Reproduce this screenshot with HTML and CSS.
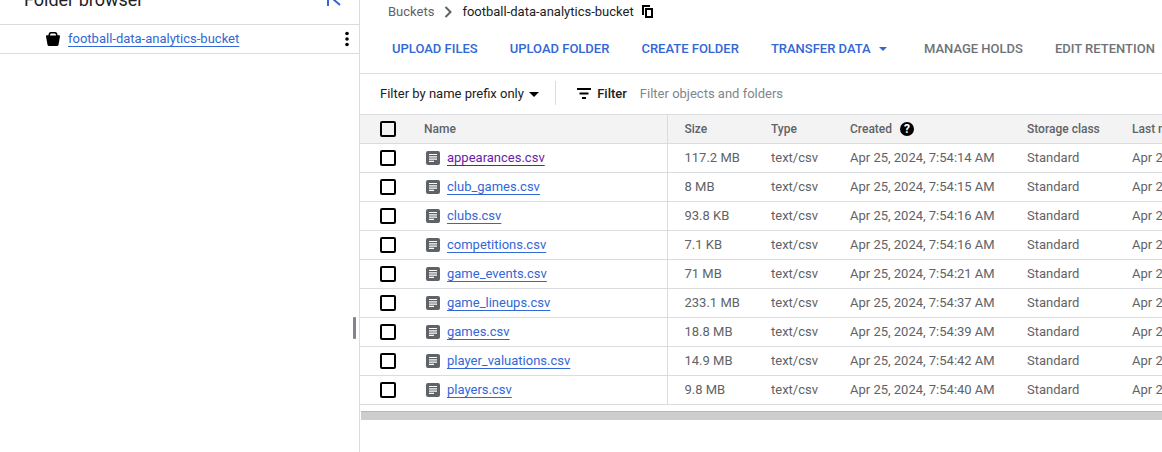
FILE: index.html
```html
<!DOCTYPE html>
<html lang="en">
<head>
    <meta charset="UTF-8">
    <title>Bucket details</title>
    <link rel="stylesheet" href="styles.css">
</head>
<body>

<svg class="defs" width="0" height="0">
    <symbol id="file-icon" viewBox="0 0 14 14">
        <rect width="14" height="14" rx="2" fill="#5f6368"/>
        <path d="M3 3.500h8M3 5.800h8M3 8.100h8M3 10.400h5" stroke="#fff" stroke-width="1.200"/>
    </symbol>
</svg>

<div class="page">
    <aside class="sidebar">
        <div class="sidebar-head">
            <h2>Folder browser</h2>
            <svg class="collapse" width="16" height="16" viewBox="0 0 16 16"><path d="M2 1v14M14 2L7 8l7 6" fill="none" stroke="#3367d6" stroke-width="2"/></svg>
        </div>
        <div class="tree-row">
            <svg class="bucket" width="14" height="14" viewBox="0 0 14 14"><path d="M2.500 3.200C2.500 1 3.500 0 5 0h4c1.500 0 2.500 1 2.500 3.200H13c.6 0 1 .4 1 1l-1.500 8.600c-.1.700-.6 1.200-1.200 1.200H2.700c-.6 0-1.100-.5-1.200-1.200L0 4.200c0-.6.4-1 1-1zM4 3.500h6c0-1.200-.4-2-1.300-2H5.300C4.400 1.500 4 2.300 4 3.500z" fill="#000" fill-rule="evenodd"/></svg>
            <a class="link" href="#">football-data-analytics-bucket</a>
            <svg class="dots" width="4" height="16" viewBox="0 0 4 16"><circle cx="2" cy="2.500" r="1.800"/><circle cx="2" cy="8" r="1.800"/><circle cx="2" cy="13.500" r="1.800"/></svg>
        </div>
    </aside>

    <main class="main">
        <div class="breadcrumb">
            <span class="crumb-root">Buckets</span>
            <svg width="10" height="12" viewBox="0 0 10 12"><path d="M2.500 1l5 5-5 5" fill="none" stroke="#5f6368" stroke-width="2"/></svg>
            <span class="crumb-current">football-data-analytics-bucket</span>
            <svg class="copy" width="11" height="13" viewBox="0 0 11 13"><path d="M1 10V1h7M4 4h6v8H4z" fill="none" stroke="#000" stroke-width="2"/></svg>
        </div>

        <div class="toolbar">
            <a class="action" href="#">UPLOAD FILES</a>
            <a class="action" href="#">UPLOAD FOLDER</a>
            <a class="action" href="#">CREATE FOLDER</a>
            <a class="action action-menu" href="#">TRANSFER DATA <span class="caret caret-blue"></span></a>
            <a class="action disabled" href="#">MANAGE HOLDS</a>
            <a class="action disabled" href="#">EDIT RETENTION</a>
        </div>

        <div class="filter-bar">
            <span class="prefix">Filter by name prefix only <span class="caret"></span></span>
            <span class="filter-divider"></span>
            <svg width="16" height="11" viewBox="0 0 16 11"><path d="M1 1h14M3.500 5.500h9M6 10h4" stroke="#000" stroke-width="1.800"/></svg>
            <span class="filter-label">Filter</span>
            <span class="filter-hint">Filter objects and folders</span>
        </div>

        <div class="table-wrap">
            <table class="objects">
                <colgroup>
                    <col class="c-check"><col class="c-name"><col class="c-size"><col class="c-type"><col class="c-created"><col class="c-class"><col class="c-last">
                </colgroup>
                <thead>
                    <tr>
                        <th class="check"><span class="box"></span></th>
                        <th class="name-col">Name</th>
                        <th class="size-col">Size</th>
                        <th>Type</th>
                        <th>Created <span class="help">?</span></th>
                        <th>Storage class</th>
                        <th>Last modified</th>
                    </tr>
                </thead>
                <tbody>
                    <tr><td class="check"><span class="box"></span></td><td class="name-col"><svg class="file"><use href="#file-icon"/></svg><a class="link visited" href="#">appearances.csv</a></td><td class="size-col">117.2 MB</td><td>text/csv</td><td>Apr 25, 2024, 7:54:14 AM</td><td>Standard</td><td>Apr 25, 2024, 7:54:14 AM</td></tr>
                    <tr><td class="check"><span class="box"></span></td><td class="name-col"><svg class="file"><use href="#file-icon"/></svg><a class="link" href="#">club_games.csv</a></td><td class="size-col">8 MB</td><td>text/csv</td><td>Apr 25, 2024, 7:54:15 AM</td><td>Standard</td><td>Apr 25, 2024, 7:54:15 AM</td></tr>
                    <tr><td class="check"><span class="box"></span></td><td class="name-col"><svg class="file"><use href="#file-icon"/></svg><a class="link" href="#">clubs.csv</a></td><td class="size-col">93.8 KB</td><td>text/csv</td><td>Apr 25, 2024, 7:54:16 AM</td><td>Standard</td><td>Apr 25, 2024, 7:54:16 AM</td></tr>
                    <tr><td class="check"><span class="box"></span></td><td class="name-col"><svg class="file"><use href="#file-icon"/></svg><a class="link" href="#">competitions.csv</a></td><td class="size-col">7.1 KB</td><td>text/csv</td><td>Apr 25, 2024, 7:54:16 AM</td><td>Standard</td><td>Apr 25, 2024, 7:54:16 AM</td></tr>
                    <tr><td class="check"><span class="box"></span></td><td class="name-col"><svg class="file"><use href="#file-icon"/></svg><a class="link" href="#">game_events.csv</a></td><td class="size-col">71 MB</td><td>text/csv</td><td>Apr 25, 2024, 7:54:21 AM</td><td>Standard</td><td>Apr 25, 2024, 7:54:21 AM</td></tr>
                    <tr><td class="check"><span class="box"></span></td><td class="name-col"><svg class="file"><use href="#file-icon"/></svg><a class="link" href="#">game_lineups.csv</a></td><td class="size-col">233.1 MB</td><td>text/csv</td><td>Apr 25, 2024, 7:54:37 AM</td><td>Standard</td><td>Apr 25, 2024, 7:54:37 AM</td></tr>
                    <tr><td class="check"><span class="box"></span></td><td class="name-col"><svg class="file"><use href="#file-icon"/></svg><a class="link" href="#">games.csv</a></td><td class="size-col">18.8 MB</td><td>text/csv</td><td>Apr 25, 2024, 7:54:39 AM</td><td>Standard</td><td>Apr 25, 2024, 7:54:39 AM</td></tr>
                    <tr><td class="check"><span class="box"></span></td><td class="name-col"><svg class="file"><use href="#file-icon"/></svg><a class="link" href="#">player_valuations.csv</a></td><td class="size-col">14.9 MB</td><td>text/csv</td><td>Apr 25, 2024, 7:54:42 AM</td><td>Standard</td><td>Apr 25, 2024, 7:54:42 AM</td></tr>
                    <tr><td class="check"><span class="box"></span></td><td class="name-col"><svg class="file"><use href="#file-icon"/></svg><a class="link" href="#">players.csv</a></td><td class="size-col">9.8 MB</td><td>text/csv</td><td>Apr 25, 2024, 7:54:40 AM</td><td>Standard</td><td>Apr 25, 2024, 7:54:40 AM</td></tr>
                </tbody>
            </table>
        </div>
        <div class="scrollbar"></div>
        <span class="drag-handle"></span>
    </main>
</div>

</body>
</html>
```

FILE: styles.css
```css
html, body {
    height: 100%;
    margin: 0;
    overflow: hidden;
}
body {
    font-family: Roboto, "Liberation Sans", sans-serif;
    font-size: 13px;
    color: #5f6368;
    background-color: #fff;
}
a {
    text-decoration: none;
}
.defs {
    display: block;
    height: 0;
}
.page {
    display: flex;
    height: 100%;
}

/* left panel */
.sidebar {
    box-sizing: border-box;
    width: 360px;
    flex: none;
    border-right: 1px solid #dadce0;
}
.sidebar-head {
    display: flex;
    align-items: center;
    justify-content: space-between;
    box-sizing: border-box;
    height: 51px;
    margin-top: -26px;
    padding: 0 17px 0 24px;
    border-bottom: 1px solid #dadce0;
}
.sidebar-head h2 {
    margin: 0;
    font-size: 18px;
    font-weight: 400;
    color: #202124;
}
.tree-row {
    display: flex;
    align-items: center;
    box-sizing: border-box;
    height: 29px;
    padding: 0 10px 0 46px;
    border-bottom: 1px solid #dadce0;
}
.tree-row .link {
    margin-bottom: 2px;
}
.bucket {
    margin-right: 8px;
}
.dots {
    margin-left: auto;
}
.link {
    color: #3367d6;
    text-decoration: underline;
    text-underline-offset: 3px;
}
.visited {
    color: #681da8;
}

/* right panel */
.main {
    position: relative;
    flex: 1;
    min-width: 0;
}
.breadcrumb {
    display: flex;
    align-items: center;
    gap: 9px;
    height: 23px;
    padding-left: 28px;
}
.crumb-root {
    color: #5f6368;
}
.crumb-current {
    color: #202124;
}
.copy {
    margin-left: -1px;
}
.toolbar {
    display: flex;
    align-items: center;
    gap: 32px;
    box-sizing: border-box;
    height: 51px;
    padding-left: 32px;
    border-bottom: 1px solid #dadce0;
    white-space: nowrap;
}
.action {
    font-weight: 500;
    font-size: 13px;
    color: #3367d6;
}
.action.disabled {
    color: #6f7378;
}
.action-menu {
    margin-right: 5px;
}
.caret {
    display: inline-block;
    width: 0;
    height: 0;
    margin-left: 2px;
    vertical-align: middle;
    border-left: 5px solid transparent;
    border-right: 5px solid transparent;
    border-top: 5px solid #000;
}
.caret-blue {
    margin-left: 5px;
    border-left-width: 4px;
    border-right-width: 4px;
    border-top: 4px solid #3367d6;
}
.filter-bar {
    display: flex;
    align-items: center;
    box-sizing: border-box;
    height: 40px;
    padding: 0 0 2px 20px;
    white-space: nowrap;
}
.prefix {
    color: #202124;
}
.filter-divider {
    width: 1px;
    height: 24px;
    margin: 0 20px 0 16px;
    background-color: #dadce0;
}
.filter-label {
    margin-left: 5px;
    font-weight: 500;
    color: #202124;
}
.filter-hint {
    margin-left: 13px;
    color: #80868b;
}

/* table */
.table-wrap {
    overflow: hidden;
}
.objects {
    width: 990px;
    table-layout: fixed;
    border-collapse: collapse;
    border-top: 1px solid #dadce0;
}
.c-check { width: 48px; }
.c-name { width: 259px; }
.c-size { width: 88px; }
.c-type { width: 79px; }
.c-created { width: 177px; }
.c-class { width: 105px; }
.c-last { width: 234px; }
.objects th, .objects td {
    box-sizing: border-box;
    height: 29px;
    padding: 0 0 0 16px;
    border-bottom: 1px solid #dadce0;
    text-align: left;
    white-space: nowrap;
    overflow: hidden;
}
.objects td {
    padding-bottom: 2px;
}
.objects th {
    font-weight: 500;
    font-size: 12px;
    color: #5f6368;
    background-color: #f3f3f3;
}
.objects th.name-col, .objects td.name-col {
    border-right: 1px solid #dadce0;
}
.objects .size-col {
    padding-left: 17px;
}
.objects .check {
    padding: 0 0 0 20px;
}
.objects td.name-col {
    padding-left: 18px;
}
.box {
    display: block;
    box-sizing: border-box;
    width: 16px;
    height: 16px;
    border: 2px solid #000;
    border-radius: 2px;
}
.file {
    width: 14px;
    height: 14px;
    margin-right: 7px;
    vertical-align: -3px;
}
.help {
    display: inline-block;
    width: 14px;
    height: 14px;
    margin-left: 5px;
    border-radius: 50%;
    background-color: #000;
    color: #fff;
    font-size: 12px;
    font-weight: 700;
    line-height: 14px;
    text-align: center;
}
.scrollbar {
    box-sizing: border-box;
    height: 9px;
    margin: 6px 0 0 1px;
    background-color: #cdcdcd;
    border-top: 1px solid #b8b8b8;
}
.drag-handle {
    position: absolute;
    left: -7px;
    top: 317px;
    width: 3px;
    height: 22px;
    background-color: #80868b;
    border-radius: 1px;
}
```
